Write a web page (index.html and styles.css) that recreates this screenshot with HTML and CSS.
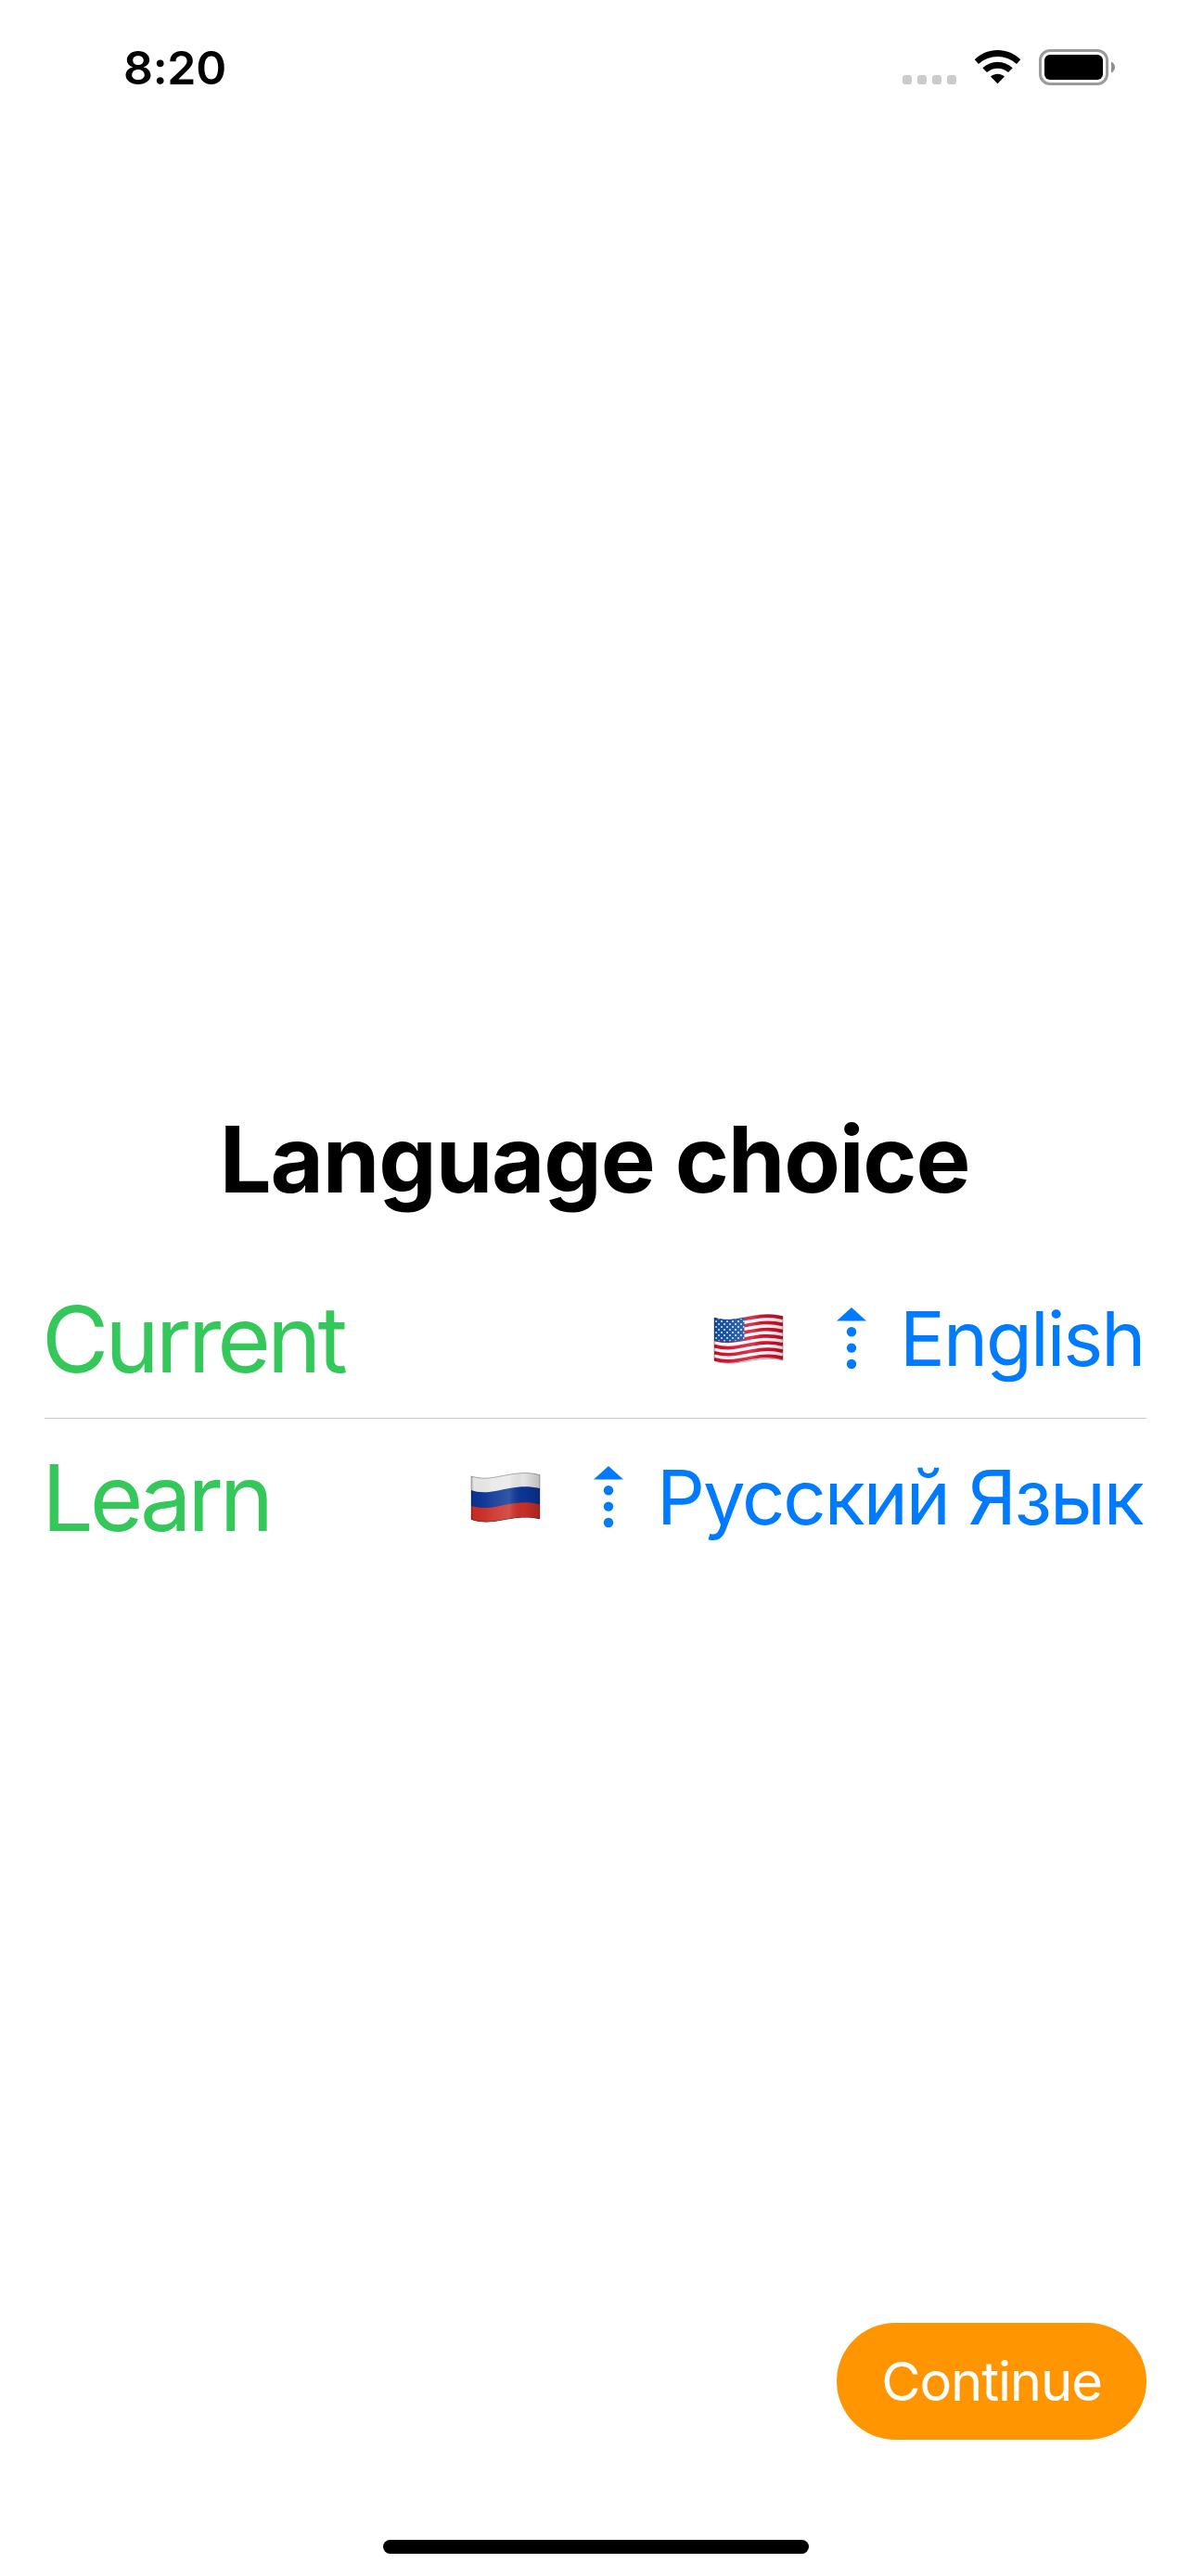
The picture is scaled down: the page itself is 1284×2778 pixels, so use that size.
FILE: index.html
```html
<!DOCTYPE html>
<html lang="en">
<head>
<meta charset="utf-8">
<title>Language choice</title>
<link rel="stylesheet" href="styles.css">
</head>
<body>
<header class="status">
  <span class="time">8:20</span>
  <svg class="indicators" width="230" height="50" viewBox="0 0 230 50" aria-hidden="true">
    <g fill="#cbcbcb"><rect x="3" y="31" width="10" height="10" rx="3"/><rect x="19" y="31" width="10" height="10" rx="3"/><rect x="35" y="31" width="10" height="10" rx="3"/><rect x="51" y="31" width="10" height="10" rx="3"/></g>
    <path d="M80.8 14.200C94.500 .5 116.500 .5 130.200 14.200L126 18.900C114.500 8.200 96.500 8.200 85 18.900Z"/>
    <path d="M89.300 23.300C98.500 14.400 112.500 14.400 121.700 23.300L117 28C110.500 22.300 100.500 22.300 94 28Z"/>
    <path d="M98 32.500C102.500 28.700 108.500 28.700 113 32.500L105.500 40.300Z"/>
    <rect x="151.500" y="4.500" width="72" height="36" rx="10.500" fill="none" stroke="#9b9b9b" stroke-width="3"/>
    <rect x="156" y="9" width="63" height="27" rx="6"/>
    <path d="M228 16.500Q232 18.500 232 22.500T228 28.500Z" fill="#8e8e8e"/>
  </svg>
</header>
<main class="content">
  <h1 class="title">Language choice</h1>
  <div class="row">
    <span class="label current">Current</span>
    <svg class="flag" viewBox="0 0 75 54" aria-hidden="true">
      <defs>
        <clipPath id="wave"><path d="M0 4C7 6 15 7 26 5C43 2 56-2 74 2.500V50C56 46 43 50 26 52.500C15 54 7 53 0 50.500Z"/></clipPath>
        <linearGradient id="shade"><stop offset="0" stop-color="#000" stop-opacity=".2"/><stop offset=".04" stop-color="#000" stop-opacity=".02"/><stop offset=".3" stop-color="#fff" stop-opacity=".08"/><stop offset=".55" stop-color="#fff" stop-opacity=".16"/><stop offset=".75" stop-color="#000" stop-opacity=".02"/><stop offset="1" stop-color="#000" stop-opacity=".2"/></linearGradient>
        <pattern id="stars" width="6" height="6" patternUnits="userSpaceOnUse"><circle cx="2" cy="2" r=".9" fill="#fff"/><circle cx="5" cy="5" r=".9" fill="#fff"/></pattern>
      </defs>
      <g clip-path="url(#wave)">
        <rect width="75" height="54" fill="#fff"/>
        <g fill="none" stroke="#d80f2c" stroke-width="3.700">
          <path d="M0 5.700C7 7.700 15 8.700 26 6.700C43 3.700 56-.3 74 4.200"/>
          <path d="M0 12.900C7 14.900 15 15.900 26 13.900C43 10.900 56 6.900 74 11.400"/>
          <path d="M0 20.100C7 22.100 15 23.100 26 21.100C43 18.100 56 14.100 74 18.600"/>
          <path d="M0 27.300C7 29.300 15 30.300 26 28.300C43 25.300 56 21.300 74 25.800"/>
          <path d="M0 34.500C7 36.500 15 37.500 26 35.500C43 32.500 56 28.500 74 33"/>
          <path d="M0 41.700C7 43.700 15 44.700 26 42.700C43 39.700 56 35.700 74 40.200"/>
          <path d="M0 48.900C7 50.900 15 51.900 26 49.900C43 46.900 56 42.900 74 47.400"/>
        </g>
        <path d="M0 0H32.500V28C20 31 10 31.500 0 28.500Z" fill="#1553a0"/>
        <path d="M0 5H32.500V27C20 30 10 30.500 0 27.500Z" fill="url(#stars)"/>
        <rect width="75" height="54" fill="url(#shade)"/>
      </g>
      <path d="M0 4C7 6 15 7 26 5C43 2 56-2 74 2.500V50C56 46 43 50 26 52.500C15 54 7 53 0 50.500Z" fill="none" stroke="#000" stroke-opacity=".3"/>
    </svg>
    <svg class="arrow" viewBox="0 0 32 68" aria-hidden="true"><path d="M16 0L32 14.500H0Z"/><circle cx="16" cy="26.300" r="5.200"/><circle cx="16" cy="43.600" r="5.200"/><circle cx="16" cy="61" r="5.200"/></svg>
    <span class="language english">English</span>
  </div>
  <div class="row">
    <span class="label learn">Learn</span>
    <svg class="flag" viewBox="0 0 75 54" aria-hidden="true">
      <g clip-path="url(#wave)">
        <rect width="75" height="54" fill="#e9e9e9"/>
        <path d="M0 19C7 21.500 15 22 26 20C43 16.500 56 13 74 17V54H0Z" fill="#0b3596"/>
        <path d="M0 36C7 38 15 39 26 37C43 33.500 56 30 74 34.500V54H0Z" fill="#cc2f26"/>
        <rect width="75" height="54" fill="url(#shade)"/>
      </g>
      <path d="M0 4C7 6 15 7 26 5C43 2 56-2 74 2.500V50C56 46 43 50 26 52.500C15 54 7 53 0 50.500Z" fill="none" stroke="#000" stroke-opacity=".3"/>
    </svg>
    <svg class="arrow" viewBox="0 0 32 68" aria-hidden="true"><path d="M16 0L32 14.500H0Z"/><circle cx="16" cy="26.300" r="5.200"/><circle cx="16" cy="43.600" r="5.200"/><circle cx="16" cy="61" r="5.200"/></svg>
    <span class="language russian" lang="ru">Русский Язык</span>
  </div>
</main>
<footer class="footer">
  <button class="continue" type="button">Continue</button>
  <div class="home"></div>
</footer>
</body>
</html>
```
FILE: styles.css
```css
* { box-sizing: border-box; }

body {
  margin: 0;
  width: 1284px;
  height: 2778px;
  display: flex;
  flex-direction: column;
  background: #fff;
  color: #000;
  font-family: Inter, "Liberation Sans", sans-serif;
}

svg { display: block; flex: none; overflow: visible; }

.status {
  height: 141px;
  padding: 48px 84px 0 133px;
  display: flex;
  justify-content: space-between;
  align-items: flex-start;
}

.time {
  font-size: 50px;
  font-weight: 600;
  line-height: 50px;
  letter-spacing: -0.3px;
}

.indicators { margin-top: 2px; }

.content {
  flex: 1;
  padding: 1049px 48px 0;
}

.title {
  margin: 0 2px 48px 0;
  font-size: 99px;
  font-weight: 700;
  line-height: 120px;
  letter-spacing: -1.2px;
  text-align: center;
  white-space: nowrap;
}

.row {
  height: 171px;
  padding-top: 1px;
  display: flex;
  align-items: center;
  white-space: nowrap;
}

.row + .row {
  height: 172px;
  padding: 0 0 1px;
  border-top: 1px solid #c6c6c8;
}

.label {
  flex: 1;
  margin-left: -3px;
  color: #34c759;
  font-size: 99px;
  line-height: 120px;
}

.current { letter-spacing: -4px; }

.learn { letter-spacing: -4.3px; }

.flag {
  width: 75px;
  height: 54px;
  margin-right: 57px;
}

.arrow {
  width: 32px;
  height: 68px;
  margin-right: 36px;
  fill: #007aff;
}

.language {
  color: #007aff;
  font-size: 81.4px;
  line-height: 100px;
}

.english {
  width: 266px;
  letter-spacing: -2px;
}

.russian {
  width: 528px;
  letter-spacing: -2.1px;
}

.footer {
  height: 273px;
  padding: 0 48px 24px;
  display: flex;
  flex-direction: column;
  justify-content: space-between;
}

.continue {
  align-self: flex-end;
  width: 334px;
  height: 126px;
  padding: 0;
  border: 0;
  border-radius: 63px;
  background: #ff9500;
  color: #fff;
  font: 400 58px/126px Inter, "Liberation Sans", sans-serif;
  letter-spacing: -1.15px;
}

.home {
  align-self: center;
  width: 459px;
  height: 15px;
  border-radius: 8px;
  background: #000;
}
```
